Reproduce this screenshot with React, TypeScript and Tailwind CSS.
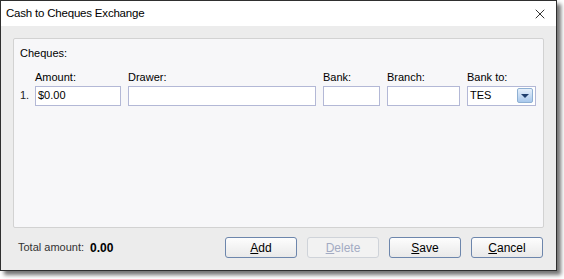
import { X } from 'lucide-react'

const ui = { fontFamily: '"Liberation Sans", Arial, sans-serif' }

function Field({ label, width, value, combo }: { label: string; width: string; value?: string; combo?: boolean }) {
  return (
    <div className={`flex flex-col ${width}`}>
      <span className="text-[11px] leading-[13px] text-black mb-[2px]">{label}</span>
      <div className="h-[20px] border border-[#b3b8d6] bg-white flex items-center pl-[2px] pr-[2px] text-[11px] text-black">
        <span className="flex-1">{value}</span>
        {combo && (
          <div className="w-[16px] h-[15px] rounded-[2px] border border-[#8fb0d3] bg-gradient-to-b from-[#e6f0fb] to-[#a8c8ec] flex items-center justify-center">
            <div className="w-0 h-0 border-l-[4px] border-r-[4px] border-t-[4px] border-l-transparent border-r-transparent border-t-[#1f3f6e]" />
          </div>
        )}
      </div>
    </div>
  )
}

function Btn({ children, disabled }: { children: React.ReactNode; disabled?: boolean }) {
  return (
    <button
      className={`w-[72px] h-[21px] rounded-[3px] border text-[12px] leading-none flex items-center justify-center ${
        disabled
          ? 'border-[#cfd3d9] bg-[#f2f2f2] text-[#a3abc3]'
          : 'border-[#6d86ac] bg-gradient-to-b from-[#fdfdfd] to-[#e9e9e9] text-black'
      }`}
    >
      {children}
    </button>
  )
}

export default function App() {
  return (
    <div className="w-[564px] h-[279px] bg-white" style={ui}>
      <div className="w-[557px] h-[271px] border border-[#2f2f2f] flex flex-col shadow-[4px_4px_4px_rgba(0,0,0,0.55)]">
        <div className="h-[25px] bg-white flex items-center justify-between pl-[5px] pr-[8px]">
          <span className="text-[11.5px] tracking-[-0.2px] text-black">Cash to Cheques Exchange</span>
          <X size={16} strokeWidth={1.2} className="text-black" />
        </div>
        <div className="flex-1 bg-[#ececec] flex flex-col px-[12px] pt-[12px]">
          <div className="h-[190px] rounded-[2px] border border-[#d2d2d2] bg-[#f7f7f9] pl-[6px] pt-[6px]">
            <div className="text-[11px] text-black">Cheques:</div>
            <div className="flex items-end mt-[9px]">
              <span className="w-[15px] text-[11px] text-[#222] h-[20px] flex items-center">1.</span>
              <div className="flex gap-[7px]">
                <Field label="Amount:" width="w-[86px]" value="$0.00" />
                <Field label="Drawer:" width="w-[188px]" />
                <Field label="Bank:" width="w-[57px]" />
                <Field label="Branch:" width="w-[73px]" />
                <Field label="Bank to:" width="w-[69px]" value="TES" combo />
              </div>
            </div>
          </div>
          <div className="flex items-center mt-[9px]">
            <div className="flex items-center gap-[6px] pl-[5px] text-[11px] flex-1">
              <span className="text-[#333]">Total amount:</span>
              <span className="font-bold text-[12px] text-black">0.00</span>
            </div>
            <div className="flex gap-[10px] pr-[1px]">
              <Btn><span><u>A</u>dd</span></Btn>
              <Btn disabled><span><u>D</u>elete</span></Btn>
              <Btn><span><u>S</u>ave</span></Btn>
              <Btn><span><u>C</u>ancel</span></Btn>
            </div>
          </div>
        </div>
      </div>
    </div>
  )
}
